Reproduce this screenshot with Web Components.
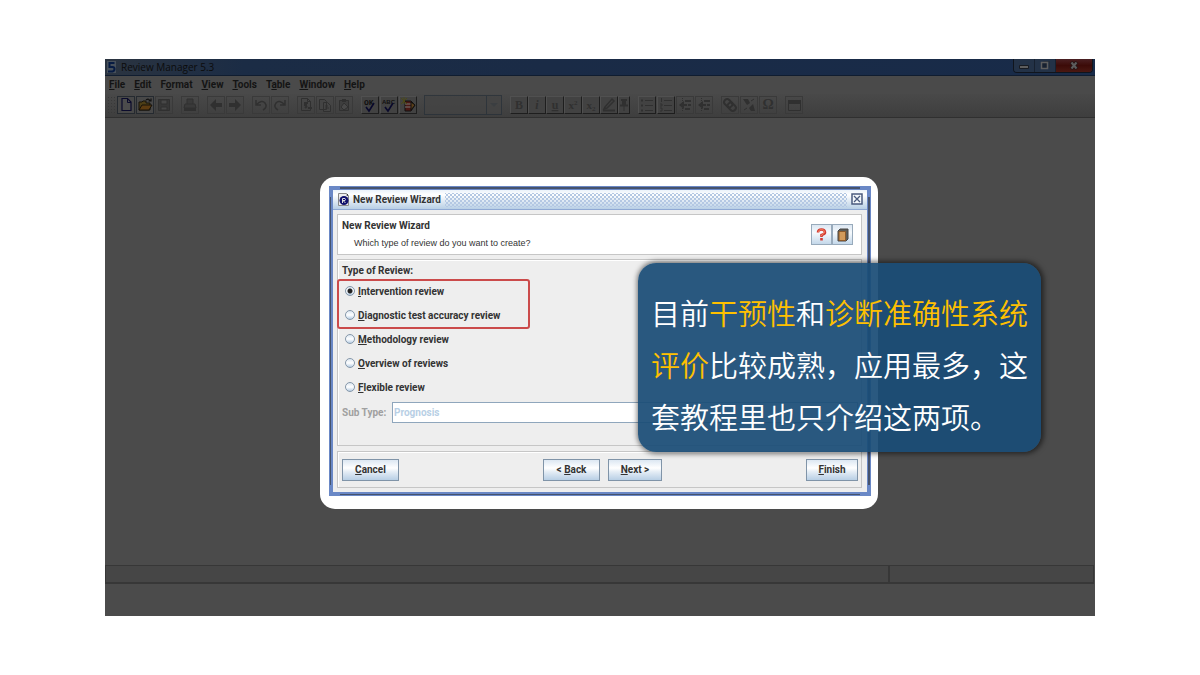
<!DOCTYPE html>
<html lang="zh-CN">
<head>
<meta charset="utf-8">
<title>Review Manager 5.3</title>
<style>
  html, body { margin: 0; background: #fff; }
  body { font-family: Roboto, "Liberation Sans", sans-serif; font-size: 10px; color: #333; }
</style>
</head>
<body>
<rm-slide></rm-slide>
<script>
const define = (name, html, setup) => customElements.define(name, class extends HTMLElement {
  constructor() {
    super();
    const t = document.createElement('template');
    t.innerHTML = html;
    this.attachShadow({ mode: 'open' }).append(t.content.cloneNode(true));
  }
  connectedCallback() { if (setup) setup(this, this.shadowRoot); }
});

const doc = '<path d="M4.5 2.5h6l3 3v9h-9z" fill="none" stroke="currentColor"/><path d="M10.5 2.5v3h3" fill="none" stroke="currentColor"/>';
const tick = '<path d="M5 11l3 4 5-8" fill="none" stroke="#09092c" stroke-width="1.6"/>';
const letters = (s, size, extra = '') => `<text x="9" y="13" text-anchor="middle" font-family="Liberation Serif, serif" font-weight="bold" font-size="${size}" fill="currentColor" ${extra}>${s}</text>`;
const icons = {
  new: '<path d="M5 2.500h5.500l3.500 3.500v8.500h-9z" fill="#4c4c4c" stroke="#0b0b2c" stroke-width="1.200"/><path d="M10.500 2.500v4h3.500" fill="none" stroke="#0b0b2c"/>',
  open: '<path d="M3 14V6h3l1-1h3v2h4v7z" fill="#4d3e16" stroke="#17120a"/><path d="M3 14l3-5h10l-3 5z" fill="#5c3b10" stroke="#17120a"/><path d="M10 4q3-2 4 1M12.500 5H15V2.500" fill="none" stroke="#111" stroke-width="1.200"/>',
  save: '<path d="M3.500 3.500h11v11h-11z" fill="#373737" stroke="currentColor"/><path d="M6 4h6v4H6zM6 11h6v3H6z" fill="#474747" stroke="currentColor"/>',
  print: '<path d="M6 8V3h6v5M4 8h10l1 4H3z" fill="#3a3a3a" stroke="currentColor"/><path d="M3 12h12v3H3z" fill="currentColor"/>',
  back: '<path d="M3 9l6-6v4h6v4H9v4z" fill="currentColor"/>',
  forward: '<path d="M15 9l-6-6v4H3v4h6v4z" fill="currentColor"/>',
  undo: '<path d="M4 4v5h5M4 9q6-6 9-2t-2 7" fill="none" stroke="currentColor" stroke-width="1.500"/>',
  redo: '<path d="M14 4v5H9M14 9Q8 3 5 7t2 7" fill="none" stroke="currentColor" stroke-width="1.500"/>',
  cut: doc + '<path d="M7 7h4M7 9h3M8 12l2-2M11 12h4" stroke="currentColor" stroke-width="2"/>',
  copy: '<path d="M3.500 3.500h5l2 2v8h-7zM7.500 6.500h4l3 3v6h-7z" fill="#444" stroke="currentColor"/><path d="M9 10h3M9 12h4" stroke="currentColor"/>',
  paste: '<path d="M4.500 4.500h9v10h-9z" fill="#3e3e3e" stroke="currentColor"/><path d="M7 3h4v3H7z" fill="currentColor"/><path d="M9 7l4 4-4 3-3-3z" fill="#494949" stroke="currentColor"/>',
  ok: '<text x="3" y="9" font-family="Liberation Mono, monospace" font-weight="bold" font-size="8" fill="#111">OK</text>' + tick,
  abc: '<text x="2" y="8" font-family="Liberation Sans, sans-serif" font-weight="bold" font-size="6" fill="#111">ABC</text>' + tick,
  notes: '<path d="M6 5h6l4 4-4 6H6z" fill="#4b1814" stroke="#111"/><path d="M6 8h6M6 11h6" stroke="#777"/><path d="M12 6l4 3-4 5z" fill="#5b3f19" stroke="#111"/><path d="M2 2l6 6M8 2L2 8M5 1v7" stroke="#4c4a16" stroke-width="1"/>',
  bold: letters('B', 12), italic: letters('i', 12, 'font-style="italic"'),
  under: letters('u', 12, 'text-decoration="underline"'),
  sup: letters('x<tspan font-size="7" dy="-4">2</tspan>', 11),
  sub: letters('x<tspan font-size="7" dy="2">2</tspan>', 11),
  pen: '<path d="M5 11l7-8 2 2-7 7-3 1z" fill="none" stroke="currentColor" stroke-width="1.500"/><path d="M3 14.500h12" stroke="currentColor" stroke-width="2"/>',
  pin: '<path d="M3 4h6M2 9.500h8" stroke="currentColor" stroke-width="2"/><path d="M4 4h4v5H4z" fill="currentColor"/><path d="M6 9v6" stroke="currentColor"/>',
  list: '<path d="M3 4.500h2M3 9.500h2M3 14.500h2" stroke="currentColor" stroke-width="2"/><path d="M7 4.500h8M7 9.500h8M7 14.500h8" stroke="currentColor"/>',
  nums: '<path d="M4.500 2v4M3 8h2v2H3M3 12h2v3H3" fill="none" stroke="currentColor"/><path d="M7 4.500h8M7 9.500h8M7 14.500h8" stroke="currentColor"/>',
  outdent: '<path d="M6.500 2v14" stroke="currentColor" stroke-dasharray="1 1"/><path d="M3 9l5-4v3h3v2H8v3zM9 4h6v2H9zM12 8h3v2h-3zM9 12h5v2H9z" fill="currentColor"/>',
  indent: '<path d="M6.500 2v14" stroke="currentColor" stroke-dasharray="1 1"/><path d="M3 9l5-4v3h3v2H8v3zM9 4h6v2H9zM12 8h3v2h-3zM9 12h5v2H9z" fill="currentColor"/>',
  link: '<g transform="rotate(45 9 9)" fill="none" stroke="currentColor" stroke-width="2"><rect x="2" y="6" width="9" height="6" rx="3"/><rect x="7" y="6" width="9" height="6" rx="3"/></g>',
  unlink: '<path d="M3 3h5l2 4-3 2zM15 15h-4l-2-3 4-4z" fill="currentColor"/><path d="M11 5l3-2M4 14l3-2" stroke="currentColor"/>',
  omega: letters('Ω', 14),
  table: '<path d="M3.500 4.500h12v10h-12z" fill="none" stroke="currentColor"/><path d="M3 4h13v4H3z" fill="currentColor"/>'
};

/* A single toolbar button; kind = (flat) | lit | raised, and slim for the narrow one */
define('rm-tool', `
<style>
  :host { display: block; width: 18px; height: 18px; flex: none; }
  :host([slim]) { width: 12px; }
  button { box-sizing: border-box; display: block; width: 100%; height: 100%; padding: 0; overflow: hidden;
    color: #303030; background: none; border: 1px solid #3a3a3a; }
  :host([kind=lit]) button { border-color: #252a30; background: #484848; }
  :host([kind=raised]) button { border-color: #505050 #1e1e1e #1e1e1e #505050; background: #424242; }
  svg { display: block; margin: -1px; }
</style>
<button type="button"></button>`, (el, root) => {
  const b = root.querySelector('button'), n = el.getAttribute('name');
  const w = el.hasAttribute('slim') ? 12 : 18;
  b.setAttribute('aria-label', n);
  b.innerHTML = `<svg width="${w}" height="18" viewBox="0 0 ${w} 18">${icons[n]}</svg>`;
});

define('rm-tool-group', `
<style>
  :host { display: flex; gap: 1px; flex: none; }
  :host([tight]) { gap: 0; }
</style><slot></slot>`);

define('rm-titlebar', `
<style>
  :host { display: flex; align-items: center; box-sizing: border-box; height: 17px; padding: 0 2px; gap: 5px;
    border-bottom: 1px solid #101d30; background: linear-gradient(90deg, #2b3440, #1b2c45 14%, #1a2b46 45%, #182b49);
    font-family: "Open Sans", sans-serif; color: #0c0c0c; }
  span { flex: 1; line-height: 16px; }
  .box { display: flex; align-self: flex-start; border: 1px solid #10151d; border-top: 0; border-radius: 0 0 4px 4px; overflow: hidden; }
  button { height: 13px; width: 21px; padding: 0; border: 0; background: #233247; border-right: 1px solid #172130; }
  button.x { width: 36px; border: 0; background: linear-gradient(#4a2023, #3c0b08 50%, #4a1812); }
  svg { display: block; margin: auto; }
  .logo { margin: 0; }
</style>
<svg class="logo" width="9" height="14" viewBox="0 0 9 14"><path d="M0 1h9v12H0z" fill="#47505a"/><path d="M7.500 3H2.500v4h3q2 0 2 2t-2 2.500H1" fill="none" stroke="#071b42" stroke-width="2"/></svg>
<span>Review Manager 5.3</span>
<div class="box">
  <button type="button" aria-label="Minimize"><svg width="10" height="9" viewBox="0 0 10 9"><path d="M.5 4.500h9v3h-9z" fill="#5e5e5e" stroke="#171b22"/></svg></button>
  <button type="button" aria-label="Restore"><svg width="10" height="9" viewBox="0 0 10 9"><path d="M3.500.5h6v6" fill="none" stroke="#252d38"/><path d="M1.500 1.500h6v6h-6z" fill="#182231" stroke="#5e5e5e" stroke-width="1.500"/></svg></button>
  <button type="button" class="x" aria-label="Close"><svg width="10" height="9" viewBox="0 0 10 9"><path d="M2 1l6 7M8 1L2 8" stroke="#291515" stroke-width="4"/><path d="M2.500 1.500l5 6M7.500 1.500l-5 6" stroke="#5c5c5c" stroke-width="2"/></svg></button>
</div>`);

define('rm-menubar', `
<style>
  :host { display: flex; align-items: flex-start; gap: 9px; padding: 0 4px; height: 18px; background: #4a4a4a; }
  button { padding: 0; border: 0; background: none; font: bold 10px/18px Roboto, sans-serif; color: #141414; }
</style>
<button type="button"><u>F</u>ile</button><button type="button"><u>E</u>dit</button><button type="button">F<u>o</u>rmat</button><button type="button"><u>V</u>iew</button><button type="button"><u>T</u>ools</button><button type="button">T<u>a</u>ble</button><button type="button"><u>W</u>indow</button><button type="button"><u>H</u>elp</button>`);

const group = (names, kind = '', attr = '') => `<rm-tool-group ${attr}>${names.split(' ').map(n => `<rm-tool name="${n}" kind="${/^(new|open)$/.test(n) ? 'lit' : kind}" ${n === 'pin' ? 'slim' : ''}></rm-tool>`).join('')}</rm-tool-group>`;
define('rm-toolbar', `
<style>
  :host { display: flex; align-items: center; gap: 8px; box-sizing: border-box; height: 24px; padding: 0 0 1px 2px;
    background: linear-gradient(#494949, #3e3e3e); border-bottom: 1px solid #303030; overflow: hidden; }
  .grip { width: 8px; height: 18px; margin-right: -6px; flex: none; background: radial-gradient(circle, #393939 1px, transparent 1px) 0 0/3px 3px; }
  .combo { box-sizing: border-box; width: 78px; height: 20px; flex: none; appearance: none; border: 1px solid #262f38; border-radius: 0;
    background: linear-gradient(#262f38, #262f38) 61px 0/1px 100% no-repeat, #444; }
  .wrap { display: grid; flex: none; margin-left: -1px; }
  .wrap > * { grid-area: 1 / 1; }
  .wrap svg { align-self: center; justify-self: end; margin-right: 4px; pointer-events: none; }
</style>
<div class="grip"></div>
${group('new open save')}${group('print')}${group('back forward')}${group('undo redo')}${group('cut copy paste')}${group('ok abc notes', 'raised')}
<div class="wrap"><select class="combo" aria-label="Style" disabled></select><svg width="8" height="4"><path d="M0 0h8L4 4z" fill="#26323d"/></svg></div>
${group('bold italic under sup sub pen pin', 'raised', 'tight')}
<rm-tool-group><rm-tool name="list" kind="raised"></rm-tool><rm-tool name="nums" kind="raised"></rm-tool><rm-tool name="outdent"></rm-tool><rm-tool name="indent"></rm-tool></rm-tool-group>
${group('link unlink omega')}${group('table')}`);

define('rm-statusbar', `
<style>
  :host { display: grid; grid-template-columns: 1fr 206px; height: 19px; margin-bottom: 32px; }
  div { background: #464646; border: 1px solid #373737; border-width: 1px 1px 2px; }
  div + div { margin-right: 1px; }
</style><div></div><div></div>`);

define('wz-button', `
<style>
  :host { display: block; width: 57px; flex: none; }
  button { box-sizing: border-box; width: 100%; height: 22px; padding: 0; border: 1px solid #8094a8; border-radius: 0;
    background: linear-gradient(#dce7f2, #fff 40%, #e3ecf5 60%, #b8cfe5); font: bold 10px/20px Roboto, sans-serif; color: #333; }
</style><button type="button"><slot></slot></button>`);

define('wz-icon-button', `
<style>
  :host { display: block; }
  button { box-sizing: border-box; display: grid; place-items: center; width: 21px; height: 21px; padding: 0;
    border: 1px solid #98aabb; background: linear-gradient(#dce7f2, #f6fafd 40%, #c4d8ea); }
</style><button type="button"><slot></slot></button>`, (el, r) => r.querySelector('button').setAttribute('aria-label', el.getAttribute('label')));

define('wz-options', `
<style>
  :host { display: block; }
  .hot { position: relative; }
  .hot::after { content: ""; position: absolute; inset: 0 auto -2px -5px; width: 189px; border: 2px solid #cb4b4b; border-radius: 3px; pointer-events: none; }
  label { display: flex; align-items: center; gap: 3px; height: 24px; padding-left: 3px; font-weight: bold; }
  span { white-space: pre; }
  input { box-sizing: border-box; width: 10px; height: 10px; margin: 0; appearance: none; border: 1px solid #8597a9; border-radius: 50%;
    background: linear-gradient(#dce7f2, #fff 50%, #b8cfe5); }
  input:checked { background: radial-gradient(circle, #222 2px, #222 2px, transparent 3px), linear-gradient(#dce7f2, #fff 50%, #b8cfe5); }
</style>
<div class="hot">
  <label><input type="radio" name="t" checked><span><u>I</u>ntervention review</span></label>
  <label><input type="radio" name="t"><span><u>D</u>iagnostic test accuracy review</span></label>
</div>
<label><input type="radio" name="t"><span><u>M</u>ethodology review</span></label>
<label><input type="radio" name="t"><span><u>O</u>verview of reviews</span></label>
<label><input type="radio" name="t"><span><u>F</u>lexible review</span></label>`);

define('wz-dialog', `
<style>
  :host { display: block; box-sizing: border-box; padding: 9px 7px 13px 9px; background: #fff; border-radius: 15px; }
  .frame { padding: 4px; --k: linear-gradient(#46536d, #46536d);
    background: var(--k) 50% 1px/calc(100% - 22px) 2px no-repeat, var(--k) 50% calc(100% - 1px)/calc(100% - 22px) 1px no-repeat,
      var(--k) 1px 50%/1px calc(100% - 22px) no-repeat, var(--k) calc(100% - 1px) 50%/2px calc(100% - 22px) no-repeat, #6a88c6; }
  header { display: flex; align-items: center; gap: 4px; box-sizing: border-box; height: 20px; padding: 0 4px 0 5px;
    border-bottom: 1px solid #8fa9d4; background: linear-gradient(#eaf2fa, #fff 25%, #b8cfe5); font-weight: bold; }
  .dots { flex: 1; height: 14px; background: radial-gradient(circle, #b4c8e3 1px, transparent 1px) 0 0/4px 4px, radial-gradient(circle, #b4c8e3 1px, transparent 1px) 2px 2px/4px 4px; }
  .close { padding: 0 0 2px; border: 0; background: none; display: block; }
  svg { display: block; }
  .body { display: grid; padding: 4px 5px 4px 4px; background: #eee; row-gap: 4px; }
  section, footer { box-sizing: border-box; border: 1px solid #c6c6c6; box-shadow: inset 1px 1px #fff; }
  .intro { display: flex; align-items: center; height: 41px; padding: 0 8px 0 4px; background: #fff; }
  .intro div { flex: 1; padding-top: 2px; }
  h1, p, h2 { margin: 0; font-size: 10px; }
  h1 { line-height: 16px; }
  p { font: 9px/19px "Liberation Sans", sans-serif; padding-left: 12px; }
  .type { padding: 2px 3px 22px 4px; margin-bottom: 1px; }
  h2 { line-height: 17px; }
  .sub { display: grid; grid-template-columns: 50px 1fr; align-items: center; margin-top: 3px; font-weight: bold; color: #a0a0a0; }
  select { appearance: none; box-sizing: border-box; height: 21px; padding: 0 1px; border: 1px solid #8fa6bc; border-radius: 0; background: #fff; color: #b8cfe5; opacity: 1; font: bold 10px Roboto, sans-serif; }
  footer { display: flex; align-items: center; height: 37px; padding: 0 3px 0 4px; }
  .mid { display: flex; gap: 8px; margin: auto; }
  .next { width: 54px; } .finish { width: 52px; }
</style>
<div class="frame">
  <header>
    <svg width="11" height="13" viewBox="0 0 11 13"><path d="M.5.5h8l2 2v10H.5z" fill="#eee" stroke="#888"/><circle cx="6" cy="7.500" r="4.500" fill="#10106c"/><path d="M8 2l2-1v2z" fill="#222"/><path d="M4.500 10V5.500H7q1 1 0 2H5l2.500 2.500" fill="none" stroke="#ddd"/></svg>
    <span>New Review Wizard</span><div class="dots"></div>
    <button class="close" type="button" aria-label="Close"><svg width="12" height="12" viewBox="0 0 12 12"><path d="M1 1h10v10H1z" fill="#f4f8fc" stroke="#495a7d" stroke-width="1.500"/><path d="M3 3l6 6M9 3L3 9" stroke="#495a7d" stroke-width="1.300"/></svg></button>
  </header>
  <div class="body">
    <section class="intro"><div><h1>New Review Wizard</h1><p>Which type of review do you want to create?</p></div>
      <wz-icon-button label="Help"><svg width="11" height="13" viewBox="0 0 11 13"><path d="M2 4.500q0-3 3.500-3T9 4.500q0 1.500-3.500 2.500v2M5.500 10V12.500" fill="none" stroke="#d23a34" stroke-width="2.600"/><path d="M2.500 4q0-2.500 3-2.500T8.500 4q0 1.500-3 3v1" fill="none" stroke="#f4825c" stroke-width="1"/></svg></wz-icon-button>
      <wz-icon-button label="Handbook"><svg width="12" height="14" viewBox="0 0 12 14"><path d="M1 3l2-2h8v10l-2 2H1z" fill="#5d5d58" stroke="#444"/><path d="M2 3.500h6.500v9H2z" fill="#d19a5a" stroke="#8c5a2a"/></svg></wz-icon-button>
    </section>
    <section class="type"><h2>Type of Review:</h2><wz-options></wz-options>
      <div class="sub"><label for="st">Sub Type:</label><select id="st" disabled><option>Prognosis</option></select></div>
    </section>
    <footer><wz-button><u>C</u>ancel</wz-button><div class="mid"><wz-button>&lt; <u>B</u>ack</wz-button><wz-button class="next"><u>N</u>ext &gt;</wz-button></div><wz-button class="finish"><u>F</u>inish</wz-button></footer>
  </div>
</div>`);

define('rm-callout', `
<style>
  :host { display: block; box-sizing: border-box; width: 403px; padding: 23px 13px 10px; border-radius: 18px;
    background: rgba(26, 76, 118, .93); box-shadow: 1px 0 5px 2px rgba(0, 0, 0, .5);
    font: 350 29px/52px "Noto Sans CJK SC", sans-serif; color: #fff; }
  p { margin: 0; white-space: nowrap; }
  span { display: block; }
  em { font-style: normal; color: #ffc000; }
</style>
<p lang="zh-CN"><span>目前<em>干预性</em>和<em>诊断准确性系统</em></span><span><em>评价</em>比较成熟&#xFF0C;应用最多&#xFF0C;这</span><span>套教程里也只介绍这两项。</span></p>`);

define('rm-slide', `
<style>
  :host { display: flex; box-sizing: border-box; min-height: 100vh; padding: 59px 105px; }
  .app { flex: 1; min-width: 0; display: flex; flex-direction: column; background: #4b4b4b; }
  main { flex: 1; display: flex; justify-content: center; align-items: flex-start; padding: 59px 2px 0 0; }
  .modal { position: relative; width: 558px; }
  rm-callout { position: absolute; left: 318px; top: 86px; }
</style>
<div class="app">
  <rm-titlebar></rm-titlebar><rm-menubar></rm-menubar><rm-toolbar></rm-toolbar>
  <main><div class="modal"><wz-dialog></wz-dialog><rm-callout></rm-callout></div></main>
  <rm-statusbar></rm-statusbar>
</div>`);
</script>
</body>
</html>
